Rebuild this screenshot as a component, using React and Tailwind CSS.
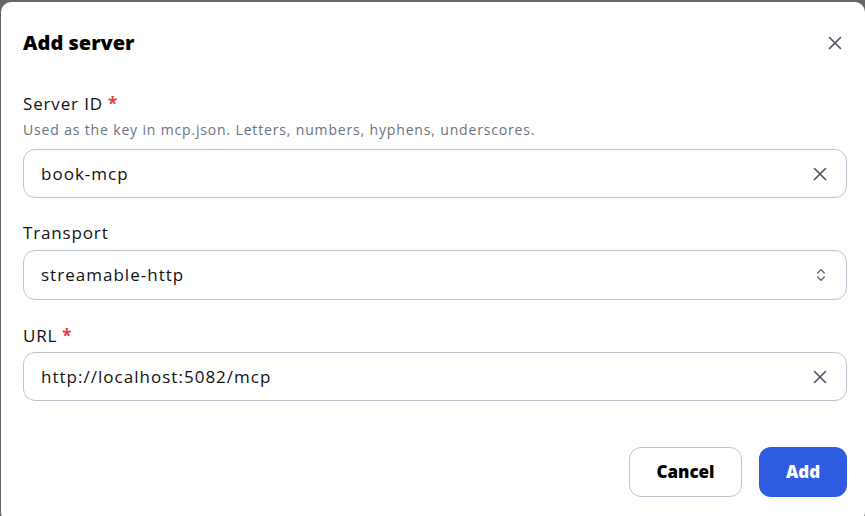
import React, { useState } from "react";
import { X, ChevronsUpDown } from "lucide-react";

function Label({ children, required }) {
  return (
    <label className="block text-[17px] leading-6 font-medium tracking-[0.05em] text-[#111]">
      {children}
      {required && <span className="text-[#e5383b] font-bold ml-[5px]">*</span>}
    </label>
  );
}

function ClearInput({ value, onChange }) {
  return (
    <div className="flex items-center h-[49px] rounded-xl border border-[#bcc4d0] pl-[17px] pr-[15px]">
      <input
        className="flex-1 bg-transparent outline-none text-[17px] tracking-[0.06em] text-[#111]"
        value={value}
        onChange={(e) => onChange(e.target.value)}
      />
      <button onClick={() => onChange("")} className="text-[#4b5563]">
        <X size={22} strokeWidth={1.75} />
      </button>
    </div>
  );
}

export default function App() {
  const [serverId, setServerId] = useState("book-mcp");
  const [url, setUrl] = useState("http://localhost:5082/mcp");

  return (
    <div
      className="w-[865px] h-[516px] bg-[#666] pt-[2px] pl-[1px] overflow-hidden"
      style={{ fontFamily: "'Open Sans', 'Noto Sans', sans-serif" }}
    >
      <div className="bg-white h-[520px] rounded-[10px] pl-[22px] pr-[18px] pt-[27px]">
        <div className="flex items-center justify-between h-7">
          <h2 className="text-[20px] font-extrabold text-black">Add server</h2>
          <button className="text-[#4b5563] mr-[1px]">
            <X size={22} strokeWidth={1.75} />
          </button>
        </div>

        <div className="mt-[35px]">
          <Label required>Server ID</Label>
          <p className="text-[14px] leading-5 tracking-[0.06em] text-[#6b7280] mt-[4px]">
            Used as the key in mcp.json. Letters, numbers, hyphens, underscores.
          </p>
          <div className="mt-[9px]">
            <ClearInput value={serverId} onChange={setServerId} />
          </div>
        </div>

        <div className="mt-[23px]">
          <Label>Transport</Label>
          <div className="mt-[5px] flex items-center h-[50px] rounded-xl border border-[#bcc4d0] pl-[17px] pr-[17px]">
            <span className="flex-1 text-[17px] tracking-[0.06em] text-[#111]">streamable-http</span>
            <ChevronsUpDown size={16} strokeWidth={1.75} className="text-[#4b5563]" />
          </div>
        </div>

        <div className="mt-[24px]">
          <Label required>URL</Label>
          <div className="mt-[4px]">
            <ClearInput value={url} onChange={setUrl} />
          </div>
        </div>

        <div className="mt-[46px] flex justify-end gap-[17px]">
          <button className="w-[113px] h-[50px] rounded-xl border border-[#bcc4d0] text-[17px] font-extrabold text-black">
            Cancel
          </button>
          <button className="w-[88px] h-[50px] rounded-xl bg-[#2f5ce1] text-[17px] font-extrabold text-white">
            Add
          </button>
        </div>
      </div>
    </div>
  );
}
